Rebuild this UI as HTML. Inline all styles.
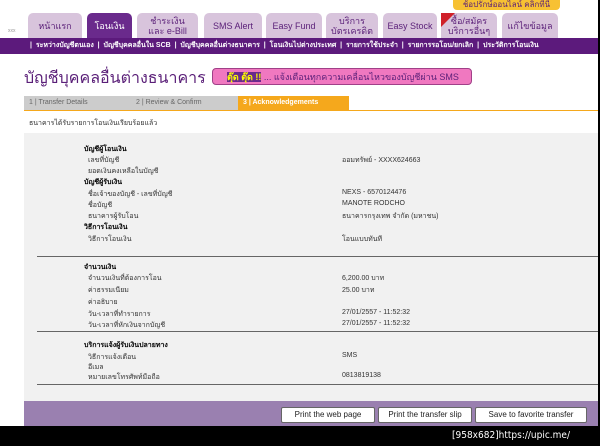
<!DOCTYPE html><html><head><meta charset="utf-8"><style>
body{margin:0;width:600px;height:446px;background:#000;overflow:hidden;font-family:"Liberation Sans","Noto Sans CJK SC",sans-serif;}
#pg{position:absolute;left:0;top:0;width:598px;height:426px;background:#fff;overflow:hidden}
.tab{position:absolute;top:13px;height:25px;background:#d8c4dc;border-radius:5px 5px 0 0;color:#5a1f78;font-size:9px;text-align:center;line-height:10px;display:flex;align-items:center;justify-content:center}
.nav{position:absolute;left:0;top:38px;width:598px;height:16px;background:#5c1a7c;color:#fff;font-size:7px;font-weight:bold;line-height:16px;white-space:nowrap}
.t{position:absolute;font-size:7px;color:#333;white-space:nowrap}
.b{font-weight:bold;color:#000}
.btn{position:absolute;top:407px;height:14px;background:#fff;border:1px solid #666;border-radius:2px;font-size:8px;line-height:14px;text-align:center;color:#222}
</style></head><body><div id="pg">
<div style="position:absolute;left:453px;top:0;width:107px;height:10px;background:#f7c133;border-radius:0 0 4px 4px;font-size:8px;color:#5a1f78;text-align:center;line-height:9px">ช้อปรักษ์ออนไลน์ คลิกที่นี่</div>
<div class="t" style="left:8px;top:28px;font-size:5px;color:#999">xxx</div>
<div class="tab" style="left:28px;width:54px">หน้าแรก</div>
<div class="tab" style="left:87px;width:45px;background:#6a2a8c;color:#fff">โอนเงิน</div>
<div class="tab" style="left:137px;width:61px">ชำระเงิน<br>และ e-Bill</div>
<div class="tab" style="left:204px;width:58px">SMS Alert</div>
<div class="tab" style="left:266px;width:56px">Easy Fund</div>
<div class="tab" style="left:326px;width:52px">บริการ<br>บัตรเครดิต</div>
<div class="tab" style="left:383px;width:54px">Easy Stock</div>
<div class="tab" style="left:441px;width:56px">ซื้อ/สมัคร<br>บริการอื่นๆ</div>
<div style="position:absolute;left:441px;top:13px;width:0;height:0;border-top:14px solid #d0202a;border-right:14px solid transparent"></div>
<div class="tab" style="left:502px;width:56px">แก้ไขข้อมูล</div>
<div class="nav"><span style="padding-left:30px">| &nbsp;ระหว่างบัญชีตนเอง &nbsp;| &nbsp;บัญชีบุคคลอื่นใน SCB &nbsp;| &nbsp;บัญชีบุคคลอื่นต่างธนาคาร &nbsp;| &nbsp;โอนเงินไปต่างประเทศ &nbsp;| &nbsp;รายการใช้ประจำ &nbsp;| &nbsp;รายการรอโอน/ยกเลิก &nbsp;| &nbsp;ประวัติการโอนเงิน</span></div>
<div class="t" style="left:24px;top:66px;font-size:16px;color:#5a1f78">บัญชีบุคคลอื่นต่างธนาคาร</div>
<div style="position:absolute;left:212px;top:68px;width:260px;height:17px;background:#f078c0;border:1px solid #a04088;border-radius:4px;font-size:9px;color:#5a1f78;line-height:17px;padding-left:14px;box-sizing:border-box;white-space:nowrap"><b style="color:#ff0;background:#6a2a8c">ตุ๊ด ตุ๊ด !!</b> ... แจ้งเตือนทุกความเคลื่อนไหวของบัญชีผ่าน SMS</div>
<div style="position:absolute;left:24px;top:96px;width:104px;height:14px;background:#ccc;font-size:7px;color:#666;line-height:14px;padding-left:5px">1 | Transfer Details</div>
<div style="position:absolute;left:131px;top:96px;width:104px;height:14px;background:#ccc;font-size:7px;color:#666;line-height:14px;padding-left:5px">2 | Review &amp; Confirm</div>
<div style="position:absolute;left:238px;top:96px;width:106px;height:14px;background:#f5a81c;font-size:7px;color:#fff;font-weight:bold;line-height:14px;padding-left:5px">3 | Acknowledgements</div>
<div style="position:absolute;left:24px;top:110px;width:574px;height:1px;background:#f5a81c"></div>
<div class="t" style="left:29px;top:118px">ธนาคารได้รับรายการโอนเงินเรียบร้อยแล้ว</div>
<div style="position:absolute;left:24px;top:133px;width:574px;height:268px;background:#f1f1f1"></div>
<div style="position:absolute;left:37px;top:256px;width:561px;height:1px;background:#666"></div>
<div style="position:absolute;left:37px;top:331px;width:561px;height:1px;background:#666"></div>
<div style="position:absolute;left:37px;top:384px;width:561px;height:1px;background:#666"></div>
<div class="t b" style="left:84px;top:144px">บัญชีผู้โอนเงิน</div>
<div class="t" style="left:88px;top:155px">เลขที่บัญชี</div><div class="t" style="left:342px;top:155px">ออมทรัพย์ - XXXX624663</div>
<div class="t" style="left:88px;top:166px">ยอดเงินคงเหลือในบัญชี</div>
<div class="t b" style="left:84px;top:177px">บัญชีผู้รับเงิน</div>
<div class="t" style="left:88px;top:189px">ชื่อเจ้าของบัญชี - เลขที่บัญชี</div><div class="t" style="left:342px;top:189px">NEXS - 6570124476</div>
<div class="t" style="left:88px;top:200px">ชื่อบัญชี</div><div class="t" style="left:342px;top:200px">MANOTE RODCHO</div>
<div class="t" style="left:88px;top:211px">ธนาคารผู้รับโอน</div><div class="t" style="left:342px;top:211px">ธนาคารกรุงเทพ จำกัด (มหาชน)</div>
<div class="t b" style="left:84px;top:222px">วิธีการโอนเงิน</div>
<div class="t" style="left:88px;top:234px">วิธีการโอนเงิน</div><div class="t" style="left:342px;top:234px">โอนแบบทันที</div>
<div class="t b" style="left:84px;top:262px">จำนวนเงิน</div>
<div class="t" style="left:88px;top:273px">จำนวนเงินที่ต้องการโอน</div><div class="t" style="left:342px;top:273px">6,200.00 บาท</div>
<div class="t" style="left:88px;top:285px">ค่าธรรมเนียม</div><div class="t" style="left:342px;top:285px">25.00 บาท</div>
<div class="t" style="left:88px;top:297px">ค่าอธิบาย</div>
<div class="t" style="left:88px;top:309px">วัน-เวลาที่ทำรายการ</div><div class="t" style="left:342px;top:309px">27/01/2557 - 11:52:32</div>
<div class="t" style="left:88px;top:320px">วัน-เวลาที่หักเงินจากบัญชี</div><div class="t" style="left:342px;top:320px">27/01/2557 - 11:52:32</div>
<div class="t b" style="left:84px;top:340px">บริการแจ้งผู้รับเงินปลายทาง</div>
<div class="t" style="left:88px;top:352px">วิธีการแจ้งเตือน</div><div class="t" style="left:342px;top:352px">SMS</div>
<div class="t" style="left:88px;top:362px">อีเมล</div>
<div class="t" style="left:88px;top:372px">หมายเลขโทรศัพท์มือถือ</div><div class="t" style="left:342px;top:372px">0813819138</div>
<div style="position:absolute;left:24px;top:401px;width:574px;height:25px;background:#9a80b0"></div>
<div class="btn" style="left:281px;width:92px">Print the web page</div>
<div class="btn" style="left:378px;width:92px">Print the transfer slip</div>
<div class="btn" style="left:475px;width:110px">Save to favorite transfer</div>
</div>
<div style="position:absolute;left:452px;top:430px;color:#fff;font-family:'DejaVu Sans Condensed',sans-serif;font-size:10px;white-space:nowrap">[958x682]https://upic.me/</div>
</body></html>
